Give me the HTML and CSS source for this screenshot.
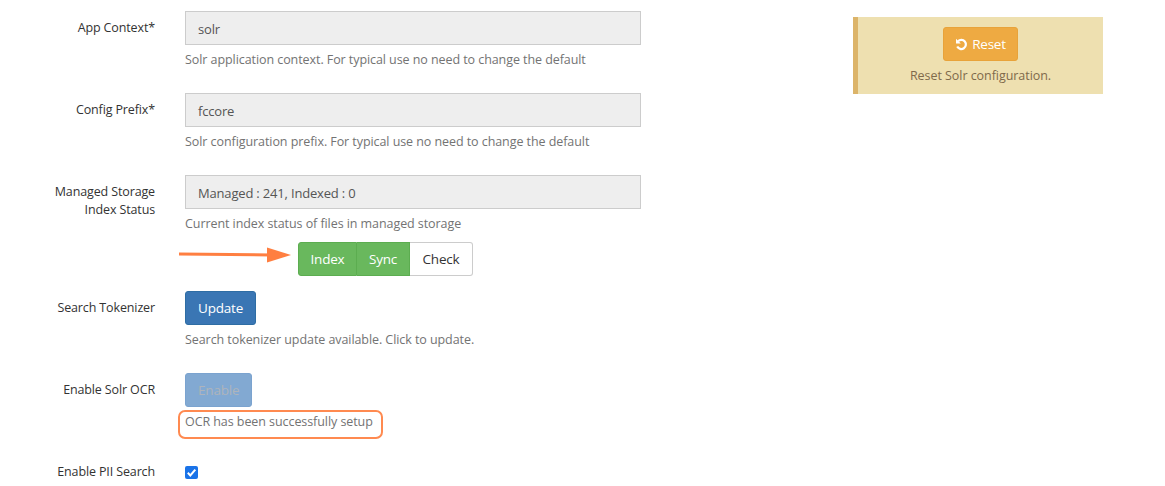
FILE: index.html
```html
<!DOCTYPE html>
<html lang="en">
<head>
<meta charset="utf-8">
<title>Solr configuration</title>
<link rel="stylesheet" href="styles.css">
</head>
<body>
<div class="page">
  <form class="form">
    <div class="row">
      <label class="label">App Context*</label>
      <div class="field">
        <div class="input">solr</div>
        <p class="help">Solr application context. For typical use no need to change the default</p>
      </div>
    </div>
    <div class="row">
      <label class="label">Config Prefix*</label>
      <div class="field">
        <div class="input">fccore</div>
        <p class="help">Solr configuration prefix. For typical use no need to change the default</p>
      </div>
    </div>
    <div class="row row-tight">
      <label class="label">Managed Storage<br>Index Status</label>
      <div class="field">
        <div class="input">Managed : 241, Indexed : 0</div>
        <p class="help">Current index status of files in managed storage</p>
        <div class="group-line">
          <svg class="arrow" width="122" height="20" viewBox="0 0 122 20" aria-hidden="true">
            <path d="M1 8 L93 9" stroke="#ff7f41" stroke-width="3" fill="none"/>
            <path d="M89 1.5 L113 9 L89 16.5 Z" fill="#ff7f41"/>
          </svg>
          <div class="btn-group">
            <span class="btn btn-success btn-index">Index</span>
            <span class="btn btn-success btn-sync">Sync</span>
            <span class="btn btn-default btn-check">Check</span>
          </div>
        </div>
      </div>
    </div>
    <div class="row">
      <label class="label">Search Tokenizer</label>
      <div class="field">
        <span class="btn btn-primary">Update</span>
        <p class="help">Search tokenizer update available. Click to update.</p>
      </div>
    </div>
    <div class="row">
      <label class="label">Enable Solr OCR</label>
      <div class="field">
        <span class="btn btn-primary btn-disabled">Enable</span>
        <p class="help help-mark">OCR has been successfully setup<span class="outline"></span></p>
      </div>
    </div>
    <div class="row row-check">
      <label class="label">Enable PII Search</label>
      <div class="field">
        <span class="check">
          <svg width="13" height="13" viewBox="0 0 13 13" aria-hidden="true">
            <path d="M2.8 6.8 L5.3 9.4 L10.3 3.6" stroke="#fff" stroke-width="2" fill="none"/>
          </svg>
        </span>
      </div>
    </div>
  </form>
  <aside class="notice">
    <span class="btn btn-warning">
      <svg class="reset-icon" width="13" height="13" viewBox="0 0 13 13" aria-hidden="true">
        <path d="M3 3.2 A4.6 4.6 0 1 1 2.2 8.6" stroke="#fff" stroke-width="2.2" fill="none"/>
        <path d="M1 0.8 L1 5.6 L5.8 5.6 Z" fill="#fff"/>
      </svg>Reset</span>
    <p class="notice-text">Reset Solr configuration.</p>
  </aside>
</div>
</body>
</html>
```
FILE: styles.css
```css
* {
  box-sizing: border-box;
}
html, body {
  margin: 0;
  padding: 0;
  background: #fff;
}
body {
  font-family: "Open Sans", "Noto Sans", "Liberation Sans", sans-serif;
  font-size: 12.5px;
  color: #333;
  height: 486px;
  overflow: hidden;
}
.page {
  display: flex;
  align-items: flex-start;
  padding-top: 11px;
  height: 486px;
  overflow: hidden;
}
.form {
  width: 641px;
  flex: none;
}
.row {
  display: grid;
  grid-template-columns: 155px 456px;
  column-gap: 30px;
  margin-bottom: 14px;
  min-height: 68px;
}
.row-tight {
  margin-bottom: 15px;
}
.row-check {
  margin-top: 14px;
  margin-bottom: 0;
  min-height: 0;
}
.label {
  text-align: right;
  line-height: 18px;
  padding-top: 8px;
  color: #333;
  letter-spacing: -0.13px;
}
.input {
  height: 34px;
  background: #eee;
  border: 1px solid #ccc;
  padding: 0 12px;
  line-height: 34px;
  font-size: 13px;
  color: #555;
  letter-spacing: -0.18px;
}
.help {
  margin: 6px 0 0;
  line-height: 17px;
  color: #737373;
  letter-spacing: -0.07px;
}
.help-mark {
  position: relative;
}
.outline {
  position: absolute;
  left: -7px;
  top: -3px;
  width: 205px;
  height: 29px;
  border: 2px solid #ff8a50;
  border-radius: 7px;
}
.group-line {
  position: relative;
  margin-top: 10px;
  padding-left: 113px;
}
.arrow {
  position: absolute;
  left: -7px;
  top: 4px;
}
.btn-group {
  display: flex;
}
.btn {
  display: inline-block;
  height: 34px;
  line-height: 32px;
  padding: 0 12px;
  border: 1px solid transparent;
  border-radius: 3px;
  font-size: 13.5px;
  letter-spacing: -0.2px;
  color: #fff;
}
.btn-group .btn {
  border-radius: 0;
}
.btn-group .btn:first-child {
  border-radius: 3px 0 0 3px;
}
.btn-group .btn:last-child {
  border-radius: 0 3px 3px 0;
  border-left: 0;
}
.btn-group .btn-index {
  width: 59px;
  padding: 0;
  text-align: center;
}
.btn-group .btn-sync {
  width: 53px;
  padding: 0;
  text-align: center;
  border-left: 0;
}
.btn-group .btn-check {
  width: 63px;
  padding: 0;
  text-align: center;
}
.btn-success {
  background: #69b85d;
  border-color: #5cad50;
}
.btn-default {
  background: #fff;
  border-color: #ccc;
  color: #333;
}
.btn-primary {
  background: #3a76b4;
  border-color: #2e6da4;
}
.btn-disabled {
  background: #82a9d2;
  border-color: #7ba3cf;
  color: #aeb4bb;
}
.btn-warning {
  background: #eeaa42;
  border-color: #e8a33a;
  padding: 0 11px;
}
.check {
  display: block;
  width: 13px;
  height: 13px;
  margin-top: 11px;
  border-radius: 2px;
  background: #1a73e8;
}
.check svg {
  display: block;
}
.notice {
  flex: none;
  margin-left: 212px;
  margin-top: 6px;
  width: 250px;
  height: 77px;
  padding-top: 10px;
  background: #eee0b0;
  border-left: 5px solid #dcb469;
  text-align: center;
}
.reset-icon {
  margin-right: 4px;
  vertical-align: -2px;
}
.notice-text {
  margin: 6px 0 0;
  line-height: 17px;
  color: #7f6a4b;
  letter-spacing: -0.05px;
}
```
